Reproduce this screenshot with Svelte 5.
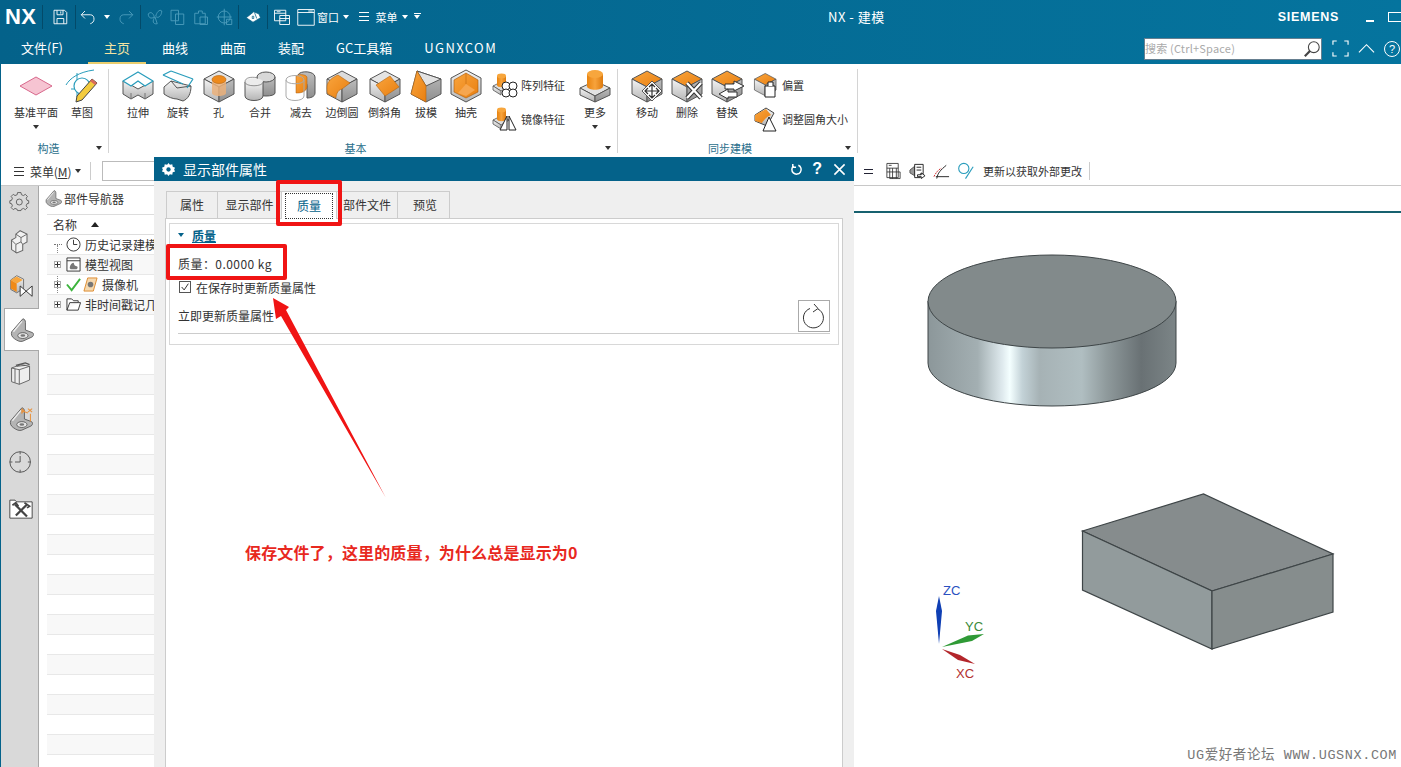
<script>
  const tabs = ['主页', '曲线', '曲面', '装配', 'GC工具箱', 'UGNXCOM']
  const basic = [
    ['extrude', '拉伸', 40], ['revolve', '旋转', 40], ['hole', '孔', 41], ['unite', '合并', 42], ['subtract', '减去', 40],
    ['blend', '边倒圆', 42], ['chamfer', '倒斜角', 43], ['draft', '拔模', 40], ['shell', '抽壳', 40]
  ]
  const rail = [
    ['gear', 32], ['blocks', 46], ['assembly', 44], ['part', 43], ['book', 46], ['partdim', 43], ['clock', 44], ['tools', 45]
  ]
  const rows = Array.from({ length: 27 }, (_, i) => i)
  const dialogTabs = [['属性', 52], ['显示部件', 64], ['质量', 55], ['部件文件', 61], ['预览', 52]]
</script>

{#snippet cube(top = 'url(#orange)')}
  <path d="M17 2 32 10 17 18 2 10Z" fill={top} stroke="#555" stroke-linejoin="round"/>
  <path d="M2 10 17 18V33L2 25Z" fill="url(#sideL)" stroke="#555" stroke-linejoin="round"/>
  <path d="M17 18 32 10V25L17 33Z" fill="url(#sideR)" stroke="#555" stroke-linejoin="round"/>
{/snippet}

{#snippet ribbonIcon(name)}
  <svg class="ri" viewBox="0 0 34 34">
    {#if name === 'extrude'}
      <path d="M2 12V25L10 30 17 26 24 30 32 25V12L17 20 10 16Z" fill="url(#sideL)" stroke="#555"/>
      <path d="M10 24V30M24 24V30" stroke="#777"/>
      <path d="M2 12 17 3 32 12 24 17 17 12 10 17Z" fill="#fff" stroke="#2a9dbc" stroke-width="1.3" stroke-linejoin="round"/>
    {:else if name === 'revolve'}
      <path d="M3 18 10 12 30 17C30 25 27 30 22 32L16 30C12 30 7 28 3 25Z" fill="url(#sideL)" stroke="#555"/>
      <path d="M10 12 16 19 30 17" fill="none" stroke="#555"/>
      <path d="M2 6 22 15M10 2 32 10M10 2 2 6M32 10 26 19" fill="none" stroke="#2a9dbc" stroke-width="1.3"/>
    {:else if name === 'hole'}
      {@render cube('#e6e6e6')}
      <path d="M10 11V24C10 28 24 28 24 24V11Z" fill="#eab07a" opacity=".85"/>
      <ellipse cx="17" cy="10.5" rx="7" ry="4" fill="#ee8a1c" stroke="#b5640f" stroke-width=".6"/>
    {:else if name === 'unite'}
      <path d="M14 8V24C14 28 32 28 32 24V8Z" fill="url(#sideR)" stroke="#555"/>
      <ellipse cx="23" cy="8" rx="9" ry="5" fill="#d8d8d8" stroke="#555"/>
      <path d="M2 13V27C2 33 20 33 20 27V13Z" fill="url(#sideL)" stroke="#555"/>
      <path d="M2 13C2 8 20 8 20 13 20 18 2 18 2 13" fill="#ececec" stroke="none"/>
      <path d="M2 13C2 8 9 8 13 8.500M2 13C2 18 20 18 20 13" fill="none" stroke="#555" stroke-opacity=".6"/>
    {:else if name === 'subtract'}
      <path d="M14 6C16 1 31 2 31 8V24C31 28 26 29 23 29V17C23 12 18 10 14 10Z" fill="url(#sideR)" stroke="#555"/>
      <path d="M23 8C21 5 15 5 12 7V24C15 24 22 24 23 18Z" fill="url(#orange)" stroke="#a85b0d" stroke-width=".5"/>
      <path d="M2 11V27C2 33 20 33 20 27V11M2 11C2 5 20 5 20 11 20 16 2 16 2 11" fill="none" stroke="#aaa"/>
    {:else if name === 'blend'}
      {@render cube('#dcdcdc')}
      <path d="M2 18C2 12 8 8 13 6L25 14 17 20C12 21 11 27 11 29L3 25C2 24 2 22 2 18Z" fill="url(#orange)" stroke="#b5640f" stroke-width=".6"/>
    {:else if name === 'chamfer'}
      {@render cube('#e4e4e4')}
      <path d="M8 16 22 7 31 18 17 27Z" fill="url(#orange)" stroke="#b5640f" stroke-width=".6"/>
    {:else if name === 'draft'}
      <path d="M8 2 32 10V25L17 33 2 25Z" fill="url(#sideR)" stroke="#555"/>
      <path d="M8 2 32 10 17 17Z" fill="#e2e2e2" stroke="#555"/>
      <path d="M8 2 17 17V33L2 25Z" fill="url(#orange)" stroke="#b5640f" stroke-width=".6"/>
    {:else if name === 'shell'}
      <path d="M17 1 32 9V25L17 33 2 25V9Z" fill="url(#sideL)" stroke="#555"/>
      <path d="M17 4 29 11V23L17 29 5 23V11Z" fill="url(#orange)" stroke="#a85b0d" stroke-width=".6"/>
      <path d="M9 24 17 15 26 21 17 27Z" fill="#f6a64f"/>
      <path d="M17 4V15" stroke="#c66e12" stroke-width=".7"/>
    {:else if name === 'more'}
      <path d="M2 19 17 12 32 19 17 27Z" fill="#e2e2e2" stroke="#555"/>
      <path d="M2 19 17 27V33L2 26Z" fill="url(#sideL)" stroke="#555"/>
      <path d="M17 27 32 19V26L17 33Z" fill="url(#sideR)" stroke="#555"/>
      <path d="M9 5V17C9 22 25 22 25 17V5Z" fill="url(#orangeH)"/>
      <ellipse cx="17" cy="5" rx="8" ry="4" fill="#f7a63d"/>
    {:else if name === 'move'}
      {@render cube()}
      <path d="M26 14 36 24 26 34 16 24Z" fill="#fff" stroke="#333" stroke-width=".8" transform="translate(-4 -2)"/>
      <path d="M22 15V29M15 22H29M19 18 22 15 25 18M19 26 22 29 25 26M18 19 15 22 18 25M26 19 29 22 26 25" fill="none" stroke="#333" stroke-width="1.2"/>
    {:else if name === 'delete'}
      {@render cube()}
      <path d="M17 14 31 29M31 14 17 29" stroke="#333" stroke-width="4.4"/>
      <path d="M17 14 31 29M31 14 17 29" stroke="#fff" stroke-width="2.4"/>
    {:else if name === 'replace'}
      {@render cube()}
      <path d="M24 12 34 17 24 22V20H15V15H24Z" fill="#fff" stroke="#333"/>
      <path d="M18 20 9 25 18 30V28H27V23H18Z" fill="#fff" stroke="#333"/>
    {/if}
  </svg>
{/snippet}

{#snippet smallIcon(name)}
  <svg class="si" viewBox="0 0 26 26">
    {#if name === 'pattern' || name === 'mirror'}
      <path d="M1 14 9 10 17 14 9 19Z" fill="#ddd" stroke="#555" stroke-width=".8"/>
      <path d="M1 14 9 19V23L1 18Z" fill="url(#sideL)" stroke="#555" stroke-width=".8"/>
      <path d="M5 4V13C5 16 14 16 14 13V4Z" fill="url(#orangeH)"/>
      <ellipse cx="9.5" cy="4" rx="4.5" ry="2.4" fill="#f7a63d"/>
      {#if name === 'pattern'}
        <g fill="#fff" stroke="#222"><circle cx="14" cy="14" r="4"/><circle cx="21" cy="14" r="4"/><circle cx="14" cy="21" r="4"/><circle cx="21" cy="21" r="4"/></g>
      {:else}
        <path d="M8 24 15 10V24ZM17 24V10L24 24Z" fill="#fff" stroke="#222"/>
      {/if}
    {:else if name === 'offset'}
      <g transform="scale(.72)">{@render cube()}</g>
      <path d="M12 14H22V25H12Z" fill="#fff" stroke="#222"/><path d="M15 14V10H20V14" fill="#fff" stroke="#222"/>
    {:else if name === 'resize'}
      <path d="M2 9 13 2 21 7 14 20 2 15Z" fill="url(#sideL)" stroke="#444"/>
      <path d="M2 9 13 3 18 9C13 11 10 15 9 17L2 15Z" fill="url(#orange)"/>
      <path d="M10 25 16 11 23 25Z" fill="#fff" stroke="#222"/>
    {/if}
  </svg>
{/snippet}

{#snippet bracket()}
  <path d="M15 1C17 1 18 3 18 5V14L26 17C28 18 28 20 26 22L15 27C12 28 9 27 5 24 2 22 1 19 2 16Z" fill="#b4b4b4" stroke="#555"/>
  <path d="M4 16 14 4" fill="none" stroke="#eee" stroke-width="1.500"/>
  <ellipse cx="15" cy="20.500" rx="6" ry="3.400" fill="#e6e6e6" stroke="#555"/>
  <ellipse cx="15" cy="20.500" rx="2.800" ry="1.500" fill="#777"/>
{/snippet}

{#snippet railIcon(name)}
  <svg class="rail-svg" viewBox="0 0 28 28">
    {#if name === 'gear'}
      <path d="M12 5H16L16.500 7.500 19 8.500 21 7 23.500 9.500 22 11.500 23 14 25 14.500V17.500L23 18 22 20.500 23.500 22.500 21 25 19 23.500 16.500 24.500 16 26H12L11.500 24.500 9 23.500 7 25 4.500 22.500 6 20.500 5 18 3 17.500V14.500L5 14 6 11.500 4.500 9.500 7 7 9 8.500 11.500 7.500Z" transform="translate(-2 -2)" fill="none" stroke="#555"/>
      <circle cx="12" cy="14" r="3.500" fill="none" stroke="#555"/>
    {:else if name === 'blocks'}
      <g transform="translate(-2 0)">
        <path d="M15 2 23 6V15L18 18V25L11 28 5 24V13L10 10V6Z" fill="#f1f1f1" stroke="#666" stroke-width="1.2"/>
        <path d="M10 6 16 10 23 6M16 10V15L10 18 5 13M10 18V28M16 15 18 18" fill="none" stroke="#666" stroke-width="1.1"/>
      </g>
    {:else if name === 'assembly'}
      <path d="M2 7 9 2 17 6V17L9 22 2 18Z" fill="url(#sideL)" stroke="#666"/>
      <path d="M2 7 9 3 16 7 9 11Z" fill="#f7a63d"/>
      <path d="M2 7 9 11V21L2 17Z" fill="#f08a18"/>
      <path d="M13 14 27 26V14L13 26Z" fill="#fff" stroke="#222"/>
    {:else if name === 'part'}
      {@render bracket()}
    {:else if name === 'partdim'}
      {@render bracket()}
      <path d="M15 2V8M15 4.500 22 7M25 8V17M22 2 27 6M27 2 22 6M15 2 18 5M15 7 18 4" fill="none" stroke="#e8923d" stroke-width="1.200"/>
    {:else if name === 'book'}
      <path d="M3 7 14 3 24 5V21L12 26 3 23Z" fill="#eee" stroke="#555"/>
      <path d="M3 7 12 9V26M12 9 24 5M7 8V24M9 5 19 4" fill="none" stroke="#555"/>
      <path d="M8 4 19 1 24 3" fill="none" stroke="#555" stroke-width="1.500"/>
    {:else if name === 'clock'}
      <circle cx="13" cy="14" r="12" fill="none" stroke="#444"/>
      <path d="M13 2V5M13 23V26M1 14H4M22 14H25M13 7V14H7" fill="none" stroke="#444"/>
    {:else if name === 'tools'}
      <path d="M1 6H7L9 8H27V27H1Z" fill="#fff" stroke="#333"/>
      <path d="M7 11 21 25M21 11 8 24" stroke="#444" stroke-width="2.600"/>
      <path d="M4 12 8 9 11 13M18 9 24 13 21 15" fill="none" stroke="#444" stroke-width="2"/>
    {/if}
  </svg>
{/snippet}

<div class="app">
  <svg class="defs" width="0" height="0">
    <defs>
      <linearGradient id="orange" x1="0" y1="0" x2="1" y2="1"><stop offset="0" stop-color="#f9a53e"/><stop offset="1" stop-color="#e97f10"/></linearGradient>
      <linearGradient id="orangeH" x1="0" y1="0" x2="1" y2="0"><stop offset="0" stop-color="#e8830f"/><stop offset=".5" stop-color="#f7a33c"/><stop offset="1" stop-color="#dd7a0e"/></linearGradient>
      <linearGradient id="sideL" x1="0" y1="0" x2="0" y2="1"><stop offset="0" stop-color="#f4f4f4"/><stop offset="1" stop-color="#b4b4b4"/></linearGradient>
      <linearGradient id="sideR" x1="0" y1="0" x2="0" y2="1"><stop offset="0" stop-color="#bdbdbd"/><stop offset="1" stop-color="#8e8e8e"/></linearGradient>
      <linearGradient id="cyl" x1="0" y1="0" x2="1" y2="0">
        <stop offset="0" stop-color="#8c979a"/><stop offset=".2" stop-color="#a3afb2"/><stop offset=".3" stop-color="#dfeaee"/>
        <stop offset=".33" stop-color="#f4ffff"/><stop offset=".38" stop-color="#c3d2d7"/><stop offset=".45" stop-color="#a6b2b5"/>
        <stop offset=".62" stop-color="#b0bec1"/><stop offset=".72" stop-color="#8f9a9c"/><stop offset=".86" stop-color="#697174"/><stop offset="1" stop-color="#7c8587"/>
      </linearGradient>
    </defs>
  </svg>

  <header class="titlebar">
    <b class="logo">NX</b>
    <i class="sep first"></i>
    <svg class="qa w26" viewBox="0 0 24 24"><path d="M4 3H18L21 6V21H4ZM8 3V9H16V3M8 21V14H17V21M13 4.500V7.500" fill="none" stroke="#fff" stroke-width="1.200"/></svg>
    <i class="sep ml2"></i>
    <svg class="qa w24" viewBox="0 0 24 24"><path d="M8 4 3 9 8 14M3 9H15C19 9 20 12 20 15 20 18 18 20 15 21" fill="none" stroke="#fff" stroke-width="1.200"/></svg>
    <i class="caret undo"></i>
    <svg class="qa w24 off" viewBox="0 0 24 24"><path d="M16 4 21 9 16 14M21 9H9C5 9 4 12 4 15 4 18 6 20 9 21" fill="none" stroke="#4d9dbc" stroke-width="1.200"/></svg>
    <i class="sep ml2"></i>
    <svg class="qa w22 ml3" viewBox="0 0 24 24"><path d="M3 8C6 4 10 7 11 12 7 15 3 13 3 8ZM21 4C18 1 14 6 13 11 16 15 21 10 21 4ZM12 12 15 21C9 22 8 17 12 12Z" fill="none" stroke="#4d9dbc" stroke-width="1.200"/></svg>
    <svg class="qa w22" viewBox="0 0 24 24"><path d="M4 3H14V17H4ZM10 8H21V22H10Z" fill="none" stroke="#4d9dbc" stroke-width="1.200"/></svg>
    <svg class="qa w24" viewBox="0 0 24 24"><path d="M5 7H10V4H15V7H19V21H5ZM12 12H22V22H12Z" fill="none" stroke="#4d9dbc" stroke-width="1.200"/></svg>
    <svg class="qa w24 ml1" viewBox="0 0 24 24"><circle cx="11" cy="12" r="8" fill="none" stroke="#4d9dbc" stroke-width="1.200"/><path d="M11 1V23M1 12H21M14 15H21V22H14Z" fill="none" stroke="#4d9dbc" stroke-width="1.200"/></svg>
    <i class="sep ml1"></i>
    <svg class="qa w28" viewBox="0 0 24 24"><path d="M3 13 13 5 20 8 22 13 12 19ZM14 6 17 14M11 11H13V14H11Z" fill="#fff" stroke="#045f86"/></svg>
    <i class="sep"></i>
    <svg class="qa w26 ml1" viewBox="0 0 24 24"><path d="M2 3H17V17H2ZM2 7H17M9 10H22V22H9ZM9 14H22M5 5H10" fill="#04668f" stroke="#fff" stroke-width="1.200"/></svg>
    <svg class="qa w22" viewBox="0 0 24 24"><path d="M1 2H23V23H1ZM1 6H23M15 4H21" fill="none" stroke="#fff" stroke-width="1.200"/></svg>
    <span class="qtext">窗口</span>
    <i class="caret after-win"></i>
    <span class="burger"></span>
    <span class="qtext">菜单</span>
    <i class="caret after-menu"></i>
    <i class="caret under"></i>
    <span class="wintitle">NX - 建模</span>
    <b class="siemens">SIEMENS</b>
    <i class="minimize"></i>
    <i class="maximize"></i>
  </header>

  <nav class="tabbar">
    <span class="tab file">文件(F)</span>
    {#each tabs as t, i}
      <span class="tab" class:active={i === 0} class:latin={t === 'UGNXCOM'}>{t}</span>
    {/each}
    <div class="search">
      <span>搜索 (Ctrl+Space)</span>
      <svg viewBox="0 0 20 20"><circle cx="12" cy="8" r="6" fill="#fff" stroke="#444" stroke-width="1.200"/><path d="M8 12 2 18" stroke="#444" stroke-width="2.400"/></svg>
    </div>
    <svg class="tb-icon" viewBox="0 0 18 18"><path d="M1 5V1H5M13 1H17V5M17 13V17H13M5 17H1V13" fill="none" stroke="#fff" stroke-width="1.200"/></svg>
    <svg class="tb-icon" viewBox="0 0 18 18"><path d="M1 13 9 5 17 13" fill="none" stroke="#fff" stroke-width="1.200"/></svg>
    <span class="help">?</span>
  </nav>

  <section class="ribbon">
    <div class="group first-group">
      <div class="tools">
        <div class="rb" style="width:46px">
          <svg class="ri" viewBox="0 0 34 34"><path d="M1 17 17 8 33 17 17 26Z" fill="#f6c4d2" stroke="#d8688c"/></svg>
          <span>基准平面</span><i class="caret dark"></i>
        </div>
        <div class="rb" style="width:46px">
          <svg class="ri" viewBox="0 0 34 34">
            <path d="M1 16C5 9 14 3 29 1" fill="none" stroke="#2a9dbc"/><path d="M12 4V28M6 20H20" fill="none" stroke="#2a9dbc"/>
            <circle cx="17" cy="17" r="8" fill="#fff" stroke="#2a9dbc" stroke-width="1.200"/>
            <path d="M27 10 32 14 17 31 11 33 12 27Z" fill="#f3cb3e" stroke="#444"/><path d="M27 10 32 14 30 16 25 12Z" fill="#d96b5a"/>
          </svg>
          <span>草图</span>
        </div>
      </div>
      <div class="gname">构造<i class="caret dark corner"></i></div>
    </div>

    <div class="group basic-group">
      <div class="tools">
        {#each basic as [name, label, w]}
          <div class="rb" style="width:{w}px">
            {@render ribbonIcon(name)}
            <span>{label}</span>
          </div>
        {/each}
        <div class="stack">
          <div class="sb">{@render smallIcon('pattern')}<span>阵列特征</span></div>
          <div class="sb">{@render smallIcon('mirror')}<span>镜像特征</span></div>
        </div>
        <div class="rb more" style="width:40px">
          {@render ribbonIcon('more')}
          <span>更多</span><i class="caret dark"></i>
        </div>
      </div>
      <div class="gname">基本<i class="caret dark corner"></i></div>
    </div>

    <div class="group sync-group">
      <div class="tools">
        <div class="rb" style="width:40px">{@render ribbonIcon('move')}<span>移动</span></div>
        <div class="rb" style="width:40px">{@render ribbonIcon('delete')}<span>删除</span></div>
        <div class="rb" style="width:40px">{@render ribbonIcon('replace')}<span>替换</span></div>
        <div class="stack">
          <div class="sb">{@render smallIcon('offset')}<span>偏置</span></div>
          <div class="sb">{@render smallIcon('resize')}<span>调整圆角大小</span></div>
        </div>
      </div>
      <div class="gname">同步建模<i class="caret dark corner"></i></div>
    </div>
  </section>

  <section class="cmdbar">
    <span class="burger dark"></span>
    <span class="menu">菜单(<u>M</u>)</span>
    <i class="caret dark"></i>
    <i class="cmdsep"></i>
    <span class="cmdinput"></span>
    <div class="cmdright">
      <span class="eq"></span>
      <svg viewBox="0 0 18 18"><path d="M2 1H14V16H2ZM2 6H14M4 3H7M2 10H16V17H5V6M8 6V17M12 6V17" fill="#fff" stroke="#333" stroke-width=".9"/></svg>
      <svg viewBox="0 0 18 18"><path d="M1 8 6 4V14L1 11Z" fill="#999" stroke="#555"/><path d="M6 2H15V12H12V16H6ZM8 5H13M8 8H13" fill="#fff" stroke="#222"/><path d="M9 13H13V11L17 14 13 17V15H9Z" fill="#fff" stroke="#222"/></svg>
      <svg viewBox="0 0 18 18"><path d="M14 3C8 8 5 11 4 17M3 15H17" fill="none" stroke="#222"/><path d="M1 15C3 11 5 8 9 6" fill="none" stroke="#c22" stroke-dasharray="2 1"/></svg>
      <svg viewBox="0 0 20 20"><circle cx="8" cy="7" r="6" fill="none" stroke="#2a9dbc" stroke-width="1.300"/><path d="M19 5 10 19" stroke="#2a9dbc" stroke-width="1.300"/></svg>
      <span class="update">更新以获取外部更改</span>
      <i class="cmdsep"></i>
    </div>
  </section>

  <main class="workspace">
    <aside class="rail">
      {#each rail as [name, h], i}
        <div class="railitem" class:selected={i === 3} style="height:{h}px">{@render railIcon(name)}</div>
      {/each}
    </aside>

    <div class="navigator">
      <div class="navhead">
        <svg viewBox="0 0 28 28">{@render bracket()}</svg>
        <span>部件导航器</span>
      </div>
      <div class="colhead"><span>名称</span><i></i></div>
      <div class="tree">
        {#each rows as r}
          <div class="row" class:odd={r % 2 === 1}>
            {#if r === 0}
              <span class="dots"></span>
              <svg class="ti" viewBox="0 0 16 16"><circle cx="8" cy="8" r="7" fill="#fff" stroke="#333"/><path d="M8 3V8H12" fill="none" stroke="#333"/></svg>
              <span class="tx">历史记录建模</span>
            {:else if r === 1}
              <span class="plus"></span>
              <svg class="ti" viewBox="0 0 16 16"><path d="M1 1H15V15H1ZM1 4H15" fill="#fff" stroke="#333"/><path d="M4 12C4 9 6 6 8 6 9 7 8 9 12 10 13 11 12 13 11 13H5Z" fill="#777"/></svg>
              <span class="tx">模型视图</span>
            {:else if r === 2}
              <span class="plus"></span>
              <svg class="ti check" viewBox="0 0 16 16"><path d="M1 8 6 14 15 2" fill="none" stroke="#3cb43c" stroke-width="2"/></svg>
              <svg class="ti" viewBox="0 0 16 16"><path d="M5 1H15L11 15H1Z" fill="#f5d9b0" stroke="#dd8a2c"/><circle cx="8" cy="8" r="3" fill="#777"/></svg>
              <span class="tx">摄像机</span>
            {:else if r === 3}
              <span class="plus"></span>
              <svg class="ti" viewBox="0 0 16 16"><path d="M1 14V2H6L8 4H13V6H4L1 14H13L15.500 6H13" fill="#fff" stroke="#333"/></svg>
              <span class="tx">非时间戳记几何体</span>
            {/if}
          </div>
        {/each}
      </div>
    </div>

    <div class="canvas">
      <div class="canvas-tabs"></div>
      <svg class="scene" viewBox="0 0 547 555">
        <g transform="translate(-854 -212)">
          <path d="M928 302V364A124 43 0 0 0 1176 364V302Z" fill="url(#cyl)" stroke="#3e4547"/>
          <ellipse cx="1052" cy="302.500" rx="124" ry="46.500" fill="#828a8b" stroke="#3e4547"/>
          <path d="M1082.500 532 1203.500 495 1333 555 1212 592Z" fill="#868c8d" stroke="#3e4547" stroke-width="1.200"/>
          <path d="M1082.500 532 1212 592V650L1082.500 591Z" fill="#929b9c" stroke="#3e4547" stroke-width="1.200"/>
          <path d="M1212 592 1333 555V613L1212 650Z" fill="#868d8d" stroke="#3e4547" stroke-width="1.200"/>
          <path d="M939 597 942 612 939 645 936 612Z" fill="#0f3fb4"/>
          <path d="M942 648 968 636.500 984 635 972 642Z" fill="#2f9a36"/>
          <path d="M942 650 960 656 975 665 958 661Z" fill="#b3262b"/>
        </g>
      </svg>
      <span class="axis z">ZC</span>
      <span class="axis y">YC</span>
      <span class="axis x">XC</span>
      <span class="watermark">UG爱好者论坛 WWW.UGSNX.COM</span>
    </div>
  </main>

  <div class="dialog">
    <div class="dlg-title">
      <svg class="dlg-gear" viewBox="0 0 16 16"><path d="M8 1 9.500 3 12 2.500 12.500 5 15 6 14 8 15 10 12.500 11 12 13.500 9.500 13 8 15 6.500 13 4 13.500 3.500 11 1 10 2 8 1 6 3.500 5 4 2.500 6.500 3Z" fill="#fff"/><circle cx="8" cy="8" r="2.300" fill="#04628a"/></svg>
      <span>显示部件属性</span>
      <svg class="dlg-btn reset" viewBox="0 0 14 14"><path d="M4 3A5 5 0 1 0 9 2.400M3 1V4.500H6.500" fill="none" stroke="#fff" stroke-width="1.600"/></svg>
      <b class="dlg-q">?</b>
      <svg class="dlg-btn" viewBox="0 0 14 14"><path d="M1.500 1.500 12.500 12.500M12.500 1.500 1.500 12.500" stroke="#fff" stroke-width="1.700"/></svg>
    </div>
    <div class="dlg-body">
      <div class="dlg-tabs">
        {#each dialogTabs as [t, w], i}
          <div class="dtab" class:on={i === 2} style="width:{w}px"><span>{t}</span></div>
        {/each}
      </div>
      <div class="dlg-panel">
        <div class="massgroup">
          <div class="mhead"><i></i><span>质量</span></div>
          <div class="mvalue">质量：0.0000 kg</div>
          <label class="mcheck"><span class="box"><svg viewBox="0 0 12 12"><path d="M2 6 5 9.500 10 2" fill="none" stroke="#333" stroke-width="1.200"/></svg></span>在保存时更新质量属性</label>
          <div class="mupdate">
            <span>立即更新质量属性</span>
            <span class="refresh"><svg viewBox="0 0 26 26"><path d="M17 6A10 10 0 1 1 9 5.500M13 1 17 5.500 12 9" fill="none" stroke="#333"/></svg></span>
          </div>
        </div>
      </div>
    </div>
  </div>

  <div class="mark tabmark"></div>
  <div class="mark massmark"></div>
  <svg class="arrow" viewBox="0 0 130 215"><path d="M1 3 17 12 14 15 114 203 9 21 4 24Z" fill="#f01414"/></svg>
  <p class="question">保存文件了，这里的质量，为什么总是显示为0</p>
</div>

<style>
  :global(body) { margin: 0; background: #fff; }
  .app {
    position: relative; width: 1401px; height: 767px; overflow: hidden;
    display: flex; flex-direction: column; background: #fff; color: #333;
    font: 12px "Noto Sans CJK SC", "Noto Sans", sans-serif;
    border-left: 1px solid #04628a; box-sizing: border-box;
  }
  .defs { position: absolute; }
  i { display: block; font-style: normal; }

  .titlebar, .tabbar { background: linear-gradient(90deg, #04628a, #05749e); color: #fff; margin-left: -1px; }
  .titlebar { height: 33px; display: flex; align-items: center; flex: none; }
  .logo { font: bold 22px "Liberation Sans", sans-serif; margin-left: 5px; width: 33px; letter-spacing: .3px; flex: none; }
  .sep { width: 1px; height: 24px; background: #034a69; flex: none; }
  .sep.first { margin: 0 4px; }
  .ml1 { margin-left: 1px; } .ml2 { margin-left: 2px; } .ml3 { margin-left: 3px; }
  .qa { flex: none; height: 18px; }
  .w22 { width: 22px; } .w24 { width: 24px; } .w26 { width: 26px; } .w28 { width: 28px; }
  .caret { width: 0; height: 0; border: 3.5px solid transparent; border-top: 4px solid #fff; border-bottom: 0; flex: none; }
  .caret.dark { border-top-color: #333; }
  .caret.undo { margin: 0 4px; }
  .caret.after-win { margin: 0 0 0 3.5px; }
  .caret.after-menu { margin: 0 0 0 4.5px; }
  .caret.under { margin-left: 6px; position: relative; }
  .caret.under::before { content: ""; position: absolute; left: -3.5px; top: -6px; width: 7px; height: 1px; background: #fff; }
  .qtext { font-size: 11px; }
  .burger { width: 10px; height: 7px; border-top: 1px solid #fff; border-bottom: 1px solid #fff; position: relative; margin: 0 7px 0 10px; flex: none; }
  .burger::after { content: ""; position: absolute; left: 0; right: 0; top: 3px; border-top: 1px solid #fff; }
  .burger.dark, .burger.dark::after { border-color: #333; }
  .wintitle { margin-left: 408px; font-size: 13px; letter-spacing: .5px; white-space: nowrap; }
  .siemens { margin-left: auto; font: bold 12.500px "Liberation Sans", sans-serif; letter-spacing: .7px; margin-right: 27px; }
  .minimize { width: 8px; height: 2px; background: #fff; margin: 8px 14px 0 0; flex: none; }
  .maximize { width: 12px; height: 8px; border: 1px solid #fff; flex: none; margin-right: -1px; }

  .tabbar { height: 31px; display: flex; align-items: flex-start; flex: none; padding-right: 1px; }
  .tab { padding: 0 16px; height: 29px; line-height: 29px; font-size: 13px; border-bottom: 2px solid transparent; white-space: nowrap; }
  .tab.file { padding: 0 25px 0 21px; }
  .tab.active { color: #f3e3a2; border-bottom-color: #e9cd6e; }
  .tab.latin { letter-spacing: 1.400px; }
  .search { margin-left: auto; width: 178px; height: 22px; margin-top: 5px; box-sizing: border-box; background: #fff; border: 1px solid #667f90; display: flex; align-items: center; justify-content: space-between; color: #aaa; font-size: 11px; letter-spacing: .2px; line-height: 18px; }
  .search span { margin-top: -2px; }
  .search svg { width: 18px; height: 18px; }
  .tb-icon { width: 17px; height: 17px; margin: 7px 0 0 9px; }
  .tb-icon:first-of-type { margin-left: 10px; }
  .help { width: 14px; height: 14px; border: 1px solid #fff; border-radius: 50%; margin: 8px 0 0 9px; text-align: center; font: 11px/14px "Liberation Sans", sans-serif; }

  .ribbon { height: 93px; flex: none; display: flex; background: #fff; padding-top: 5px; box-sizing: border-box; }
  .group { display: flex; flex-direction: column; border-right: 1px solid #d4d4d4; height: 84px; box-sizing: border-box; flex: none; }
  .first-group { width: 108px; padding-left: 12px; }
  .basic-group { width: 509px; padding-left: 9px; }
  .sync-group { width: 240px; padding-left: 9px; }
  .tools { display: flex; height: 71px; flex: none; }
  .rb { display: flex; flex-direction: column; align-items: center; flex: none; font-size: 11px; white-space: nowrap; }
  .rb span { margin-top: 1px; line-height: 16px; }
  .ri { width: 34px; height: 34px; display: block; flex: none; overflow: visible; }
  .rb .caret { margin: 5px 0 0; }
  .more { margin-left: 10px; }
  .stack { display: flex; flex-direction: column; gap: 8px; margin-left: 6px; padding-top: 3px; }
  .sb { display: flex; align-items: center; gap: 3px; height: 26px; font-size: 11px; white-space: nowrap; }
  .si { width: 26px; height: 26px; flex: none; }
  .gname { position: relative; text-align: center; font-size: 11px; line-height: 16px; color: #2b6f8c; padding-right: 24px; }
  .corner { position: absolute; right: 6px; top: 6px; margin: 0; }

  .cmdbar { height: 29px; flex: none; box-sizing: border-box; border-bottom: 1px solid #c8c8c8; display: flex; align-items: center; }
  .cmdbar > .burger { margin: 0 6px 0 13px; }
  .menu { font-size: 12px; letter-spacing: -.1px; }
  .cmdbar > .caret { margin: 0 0 0 4px; }
  .cmdsep { width: 1px; height: 18px; background: #ccc; margin: 0 11px 0 9px; flex: none; }
  .cmdinput { width: 100px; height: 20px; box-sizing: border-box; border: 1px solid #bbb; }
  .cmdright { margin-left: auto; width: 537px; display: flex; align-items: center; gap: 7px; }
  .cmdright svg { width: 17px; height: 18px; flex: none; }
  .eq { width: 9px; height: 3px; border-top: 1px solid #223; border-bottom: 1px solid #223; margin-right: 5px; flex: none; }
  .update { font-size: 11px; white-space: nowrap; margin-left: 2px; }
  .cmdright .cmdsep { margin: 0; }

  .workspace { flex: 1; min-height: 0; display: flex; }
  .rail { width: 37px; flex: none; background: #d9d9d9; border-right: 1px solid #a8a8a8; display: flex; flex-direction: column; }
  .railitem { display: flex; align-items: center; justify-content: center; margin-left: 3px; box-sizing: border-box; flex: none; }
  .railitem.selected { background: #fff; border: 1px solid #a8a8a8; border-right: 0; margin-right: -1px; }
  .rail-svg { width: 24px; height: 28px; flex: none; }
  .navigator { width: 800px; flex: none; padding-left: 8px; box-sizing: border-box; }
  .navhead { height: 25px; padding-bottom: 3px; display: flex; align-items: center; gap: 2px; margin-left: -2px; }
  .navhead svg { width: 17px; height: 17px; }
  .colhead { height: 21px; box-sizing: border-box; border-top: 1px solid #ddd; border-bottom: 1px solid #ddd; display: flex; align-items: center; padding-left: 6px; gap: 14px; }
  .colhead i { width: 0; height: 0; border: 4px solid transparent; border-bottom: 5px solid #222; border-top: 0; }
  .tree { position: relative; }
  .tree::before { content: ""; position: absolute; left: 10px; top: 10px; height: 60px; border-left: 1px dotted #888; }
  .row { height: 20px; box-sizing: border-box; border-bottom: 1px solid #e8e8e8; display: flex; align-items: center; padding-left: 7px; position: relative; }
  .row.odd { background: #f8f8f8; }
  .plus { width: 7px; height: 7px; box-sizing: border-box; margin-right: 5px; border: 1px solid #aaa; background: linear-gradient(#333, #333) center/5px 1px no-repeat, linear-gradient(#333, #333) center/1px 5px no-repeat, #fff; flex: none; position: relative; }
  .dots { width: 8px; margin-right: 4px; border-top: 1px dotted #777; flex: none; }
  .ti { width: 15px; height: 15px; flex: none; margin-right: 4px; }
  .ti.check { margin-right: 2px; }

  .canvas { position: absolute; left: 853px; right: 0; top: 186px; bottom: 0; }
  .canvas-tabs { position: absolute; left: 0; right: 0; top: 25px; height: 2px; background: #17616f; }
  .scene { position: absolute; left: 0; top: 25px; width: 547px; height: 555px; }
  .axis { position: absolute; font: 13px "Liberation Sans", sans-serif; }
  .axis.z { left: 89px; top: 397px; color: #2a50c0; }
  .axis.y { left: 111px; top: 433px; color: #3a8a3a; }
  .axis.x { left: 102px; top: 480px; color: #b23030; }
  .watermark { position: absolute; right: 4px; bottom: 4px; font: 13.500px "Liberation Mono", "Noto Sans CJK SC", monospace; color: #777; letter-spacing: .6px; white-space: nowrap; }

  .dialog { position: absolute; left: 153px; top: 157px; width: 700px; bottom: -1px; background: #efefef; display: flex; flex-direction: column; }
  .dlg-title { height: 24px; flex: none; background: #04628a; color: #fff; display: flex; align-items: center; font-size: 14px; padding: 0 8px 0 7px; gap: 7px; }
  .dlg-gear { width: 15px; height: 15px; }
  .dlg-title .reset { margin-left: auto; }
  .dlg-btn { width: 13px; height: 13px; }
  .dlg-q { font: bold 16px "Liberation Sans", sans-serif; margin: 0 4px 0 2px; }
  .dlg-body { flex: 1; padding: 10px 11px 0 11px; display: flex; flex-direction: column; }
  .dlg-tabs { display: flex; padding-left: 1px; height: 27px; flex: none; }
  .dtab { height: 27px; box-sizing: border-box; border: 1px solid #ccc; border-bottom: 0; border-left: 0; display: flex; align-items: center; justify-content: center; padding-bottom: 1px; }
  .dtab:first-child { border-left: 1px solid #ccc; }
  .dtab:last-child { padding-left: 3px; }
  .dtab.on { background: #fff; color: #04628a; height: 28px; position: relative; padding-bottom: 0; }
  .dtab.on span { border: 1px dotted #333; width: 48px; height: 26px; box-sizing: border-box; text-align: center; line-height: 24px; }
  .dlg-panel { flex: 1; background: #fff; border: 1px solid #ccc; padding: 4px 3px; }
  .massgroup { height: 122px; box-sizing: border-box; border: 1px solid #d8d8d8; padding: 0 8px; position: relative; }
  .mhead { display: flex; align-items: center; height: 22px; color: #04628a; font-weight: bold; gap: 8px; }
  .mhead i { width: 0; height: 0; border: 3.500px solid transparent; border-top: 4px solid #04628a; border-bottom: 0; }
  .mhead span { text-decoration: underline; }
  .mvalue { margin-top: 9px; height: 18px; line-height: 18px; letter-spacing: .45px; }
  .mcheck { display: flex; align-items: center; gap: 5px; margin-top: 5px; margin-left: 1px; height: 18px; }
  .box { width: 12px; height: 12px; box-sizing: border-box; border: 1px solid #555; background: #fff; display: block; }
  .box svg { display: block; width: 10px; height: 10px; }
  .mupdate { margin-top: 1px; height: 36px; border-bottom: 1px solid #ccc; display: flex; align-items: center; justify-content: space-between; }
  .refresh { width: 32px; height: 32px; box-sizing: border-box; border: 1px solid #aaa; background: #fff; display: flex; align-items: center; justify-content: center; margin-top: 1px; }
  .refresh svg { width: 26px; height: 26px; }

  .mark { position: absolute; box-sizing: border-box; border: 4px solid #f01414; border-radius: 2px; }
  .tabmark { left: 275px; top: 180px; width: 66px; height: 46px; }
  .massmark { left: 165px; top: 244px; width: 121px; height: 36px; }
  .arrow { position: absolute; left: 271px; top: 295px; width: 130px; height: 215px; }
  .question { position: absolute; left: 244px; top: 541px; margin: 0; font-size: 16px; line-height: 22px; font-weight: bold; letter-spacing: .15px; color: #e8281e; white-space: nowrap; }
</style>
